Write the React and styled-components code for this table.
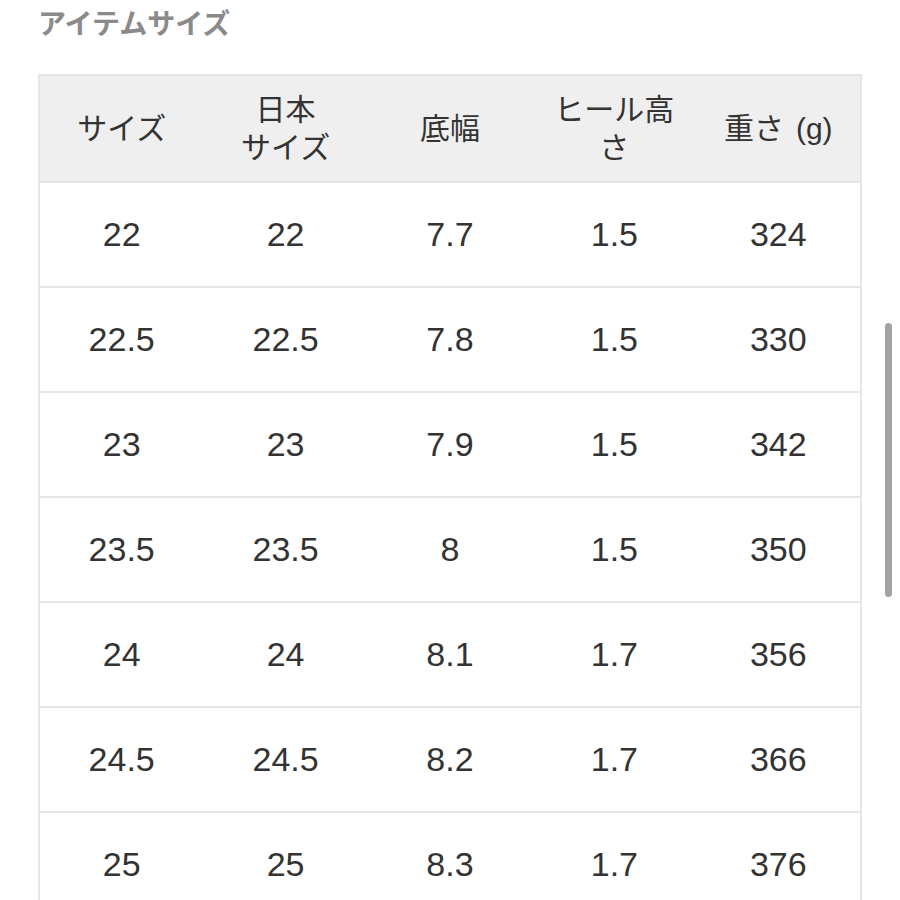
import React from "react";
import styled, { createGlobalStyle } from "styled-components";

const Global = createGlobalStyle`
  html, body { margin: 0; padding: 0; background: #fff; overflow: hidden; }
  body { font-family: "Liberation Sans", "Noto Sans CJK JP", sans-serif; }
`;

const Page = styled.div`
  position: relative;
  width: 900px;
  height: 900px;
  overflow: hidden;
  box-sizing: border-box;
  padding: 6px 38px 0 38px;
`;

const Title = styled.h2`
  margin: 0;
  font-size: 28px;
  font-weight: 700;
  color: #8a8a8a;
  line-height: 38px;
`;

const Table = styled.table`
  margin-top: 30px;
  width: 824px;
  border-collapse: collapse;
  table-layout: fixed;
  border: 2px solid #e6e6e6;
`;

const HeadCell = styled.th`
  background: #efefef;
  height: 105px;
  padding: 0 10px;
  font-size: 30px;
  font-weight: 400;
  line-height: 38px;
  color: #333;
  text-align: center;
  vertical-align: middle;
  border-bottom: 2px solid #e6e6e6;
`;

const Cell = styled.td`
  height: 103px;
  padding: 0 8px;
  font-size: 34px;
  color: #333;
  text-align: center;
  vertical-align: middle;
  border-top: 2px solid #e6e6e6;
`;

const Unit = styled.span`
  margin-left: 12px;
`;

const Scrollbar = styled.div`
  position: absolute;
  left: 885px;
  top: 323px;
  width: 7px;
  height: 274px;
  border-radius: 4px;
  background: #a3a3a3;
`;

const rows = [
  ["22", "22", "7.7", "1.5", "324"],
  ["22.5", "22.5", "7.8", "1.5", "330"],
  ["23", "23", "7.9", "1.5", "342"],
  ["23.5", "23.5", "8", "1.5", "350"],
  ["24", "24", "8.1", "1.7", "356"],
  ["24.5", "24.5", "8.2", "1.7", "366"],
  ["25", "25", "8.3", "1.7", "376"],
];

export default function App() {
  return (
    <Page>
      <Global />
      <Title>アイテムサイズ</Title>
      <Table>
        <thead>
          <tr>
            <HeadCell>サイズ</HeadCell>
            <HeadCell>
              日本
              <br />
              サイズ
            </HeadCell>
            <HeadCell>底幅</HeadCell>
            <HeadCell>
              ヒール高
              <br />さ
            </HeadCell>
            <HeadCell>
              重さ<Unit>(g)</Unit>
            </HeadCell>
          </tr>
        </thead>
        <tbody>
          {rows.map((r, i) => (
            <tr key={i}>
              {r.map((c, j) => (
                <Cell key={j}>{c}</Cell>
              ))}
            </tr>
          ))}
        </tbody>
      </Table>
      <Scrollbar />
    </Page>
  );
}
